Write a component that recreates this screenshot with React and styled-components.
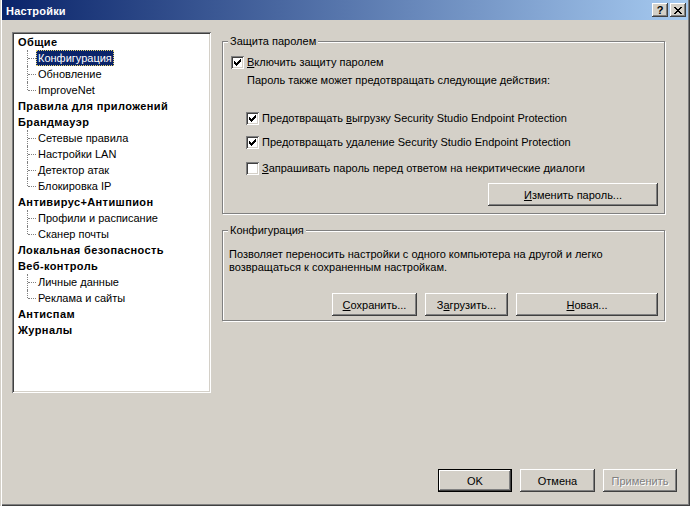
import React from 'react';
import styled, { createGlobalStyle, css } from 'styled-components';

const GlobalStyle = createGlobalStyle`
  html, body {
    margin: 0;
    padding: 0;
    background: #d4d0c8;
  }
  body {
    font-family: "Liberation Sans", Arial, sans-serif;
    font-size: 11px;
    color: #000;
  }
`;

const tree = [
  { label: 'Общие', children: ['Конфигурация', 'Обновление', 'ImproveNet'] },
  { label: 'Правила для приложений' },
  { label: 'Брандмауэр', children: ['Сетевые правила', 'Настройки LAN', 'Детектор атак', 'Блокировка IP'] },
  { label: 'Антивирус+Антишпион', children: ['Профили и расписание', 'Сканер почты'] },
  { label: 'Локальная безопасность' },
  { label: 'Веб-контроль', children: ['Личные данные', 'Реклама и сайты'] },
  { label: 'Антиспам' },
  { label: 'Журналы' },
];

const CHECK = [
  '......#',
  '.....##',
  '#...###',
  '##.###.',
  '#####..',
  '.###...',
  '..#....',
];

const Window = styled.div`
  width: 690px;
  height: 506px;
  box-sizing: border-box;
  padding: 0 2px 2px 2px;
  background: #d4d0c8;
  box-shadow: inset 1px 0 #d4d0c8, inset 2px 0 #fff, inset -1px -1px #404040,
    inset -2px -2px #808080;
  display: flex;
  flex-direction: column;
  overflow: hidden;
`;

const TitleBar = styled.div`
  height: 20px;
  flex: none;
  display: flex;
  align-items: center;
  padding: 0 2px 0 4px;
  background: linear-gradient(to right, #0a246a, #a6caf0);
  color: #fff;
  font-weight: bold;
  font-size: 11px;
`;

const TitleText = styled.div`
  flex: 1;
  line-height: 20px;
  padding-top: 1px;
  letter-spacing: 0.2px;
`;

const TitleButton = styled.div`
  width: 16px;
  height: 14px;
  box-sizing: border-box;
  margin-left: 2px;
  background: #d4d0c8;
  box-shadow: inset -1px -1px #404040, inset 1px 1px #fff, inset -2px -2px #808080;
  color: #000;
  font-size: 11px;
  font-weight: bold;
  line-height: 14px;
  text-align: center;
  display: flex;
  align-items: center;
  justify-content: center;
`;

const Body = styled.div`
  flex: 1;
  display: flex;
  flex-direction: column;
  padding: 12px 10px 0 10px;
`;

const Main = styled.div`
  display: flex;
  gap: 11px;
  height: 361px;
`;

const TreePanel = styled.div`
  width: 199px;
  height: 361px;
  box-sizing: border-box;
  padding: 2px;
  background: #fff;
  box-shadow: inset 1px 1px #808080, inset -1px -1px #fff, inset 2px 2px #404040,
    inset -2px -2px #d4d0c8;
`;

const TreeRow = styled.div`
  position: relative;
  height: 16px;
  display: flex;
  align-items: center;
  padding-left: ${p => (p.$child ? 22 : 2)}px;
  font-weight: ${p => (p.$child ? 'normal' : 'bold')};
  letter-spacing: ${p => (p.$child ? 0 : 0.4)}px;

  ${p =>
    p.$child &&
    css`
      &::before {
        content: '';
        position: absolute;
        left: 13px;
        top: 0;
        height: ${p.$last ? 8 : 16}px;
        border-left: 1px dotted #808080;
      }
      &::after {
        content: '';
        position: absolute;
        left: 14px;
        top: 8px;
        width: 8px;
        border-top: 1px dotted #808080;
      }
    `}
`;

const TreeLabel = styled.span`
  height: 16px;
  line-height: 16px;
  padding: 0 2px;
  white-space: nowrap;
  box-sizing: border-box;
  ${p =>
    p.$selected &&
    css`
      background: #0a246a;
      color: #fff;
      outline: 1px dotted #e8d670;
      outline-offset: -1px;
    `}
`;

const RightColumn = styled.div`
  width: 444px;
  padding-top: 9px;
  display: flex;
  flex-direction: column;
`;

const GroupBox = styled.div`
  position: relative;
  width: 443px;
  height: ${p => p.$h}px;
  box-sizing: border-box;
  margin-top: ${p => p.$mt || 0}px;
  border: 1px solid #808080;
  box-shadow: inset 1px 1px #fff, 1px 1px #fff;
  display: flex;
  flex-direction: column;
`;

const Caption = styled.div`
  position: absolute;
  top: -7px;
  left: 5px;
  padding: 0 2px;
  line-height: 13px;
  background: #d4d0c8;
`;

const CheckRow = styled.div`
  display: flex;
  align-items: center;
  height: 13px;
  margin-top: ${p => p.$mt}px;
  margin-left: ${p => p.$ml}px;
`;

const CheckBox = styled.span`
  width: 13px;
  height: 13px;
  flex: none;
  background: #fff;
  box-shadow: inset 1px 1px #808080, inset -1px -1px #fff, inset 2px 2px #404040,
    inset -2px -2px #d4d0c8;
  display: block;
`;

const CheckText = styled.span`
  margin-left: 3px;
  line-height: 13px;
  white-space: nowrap;
`;

const Text = styled.div`
  line-height: 13px;
  margin-top: ${p => p.$mt}px;
  margin-left: ${p => p.$ml}px;
  white-space: nowrap;
`;

const ButtonRow = styled.div`
  display: flex;
  justify-content: flex-end;
  gap: 8px;
  margin-top: ${p => p.$mt}px;
  padding-right: ${p => p.$pr}px;
`;

const Button = styled.button`
  width: ${p => p.$w}px;
  height: 23px;
  box-sizing: border-box;
  padding: 0;
  margin: 0;
  font-family: "Liberation Sans", Arial, sans-serif;
  font-size: 11px;
  font-weight: normal;
  color: #000;
  background: #d4d0c8;
  border: none;
  box-shadow: inset -1px -1px #404040, inset 1px 1px #fff, inset -2px -2px #808080;
  ${p =>
    p.$default &&
    css`
      box-shadow: inset 0 0 0 1px #000, inset -2px -2px #404040, inset 2px 2px #fff,
        inset -3px -3px #808080;
    `}
  ${p =>
    p.$disabled &&
    css`
      color: #808080;
      text-shadow: 1px 1px #fff;
    `}
`;

const Footer = styled.div`
  margin-top: 76px;
  display: flex;
  justify-content: flex-end;
  gap: 8px;
  padding-right: 1px;
`;

function CheckMark() {
  const px = [];
  CHECK.forEach((row, y) =>
    row.split('').forEach((c, x) => {
      if (c === '#') px.push(<rect key={`${x}-${y}`} x={x + 3} y={y + 3} width="1" height="1" />);
    })
  );
  return (
    <svg width="13" height="13" viewBox="0 0 13 13" shapeRendering="crispEdges" fill="#000">
      {px}
    </svg>
  );
}

function Check({ checked, mt, ml, children }) {
  return (
    <CheckRow $mt={mt} $ml={ml}>
      <CheckBox>{checked && <CheckMark />}</CheckBox>
      <CheckText>{children}</CheckText>
    </CheckRow>
  );
}

function CloseGlyph() {
  return (
    <svg width="8" height="7" viewBox="0 0 8 7" shapeRendering="crispEdges" fill="#000">
      <path d="M0 0h2v1h-2zM6 0h2v1h-2zM1 1h2v1h-2zM5 1h2v1h-2zM2 2h4v1h-4zM3 3h2v1h-2zM2 4h4v1h-4zM1 5h2v1h-2zM5 5h2v1h-2zM0 6h2v1h-2zM6 6h2v1h-2z" />
    </svg>
  );
}

export default function App() {
  return (
    <>
      <GlobalStyle />
      <Window>
        <TitleBar>
          <TitleText>Настройки</TitleText>
          <TitleButton>?</TitleButton>
          <TitleButton>
            <CloseGlyph />
          </TitleButton>
        </TitleBar>
        <Body>
          <Main>
            <TreePanel>
              {tree.map(node => (
                <React.Fragment key={node.label}>
                  <TreeRow>
                    <TreeLabel>{node.label}</TreeLabel>
                  </TreeRow>
                  {(node.children || []).map((child, i, arr) => (
                    <TreeRow key={child} $child $last={i === arr.length - 1}>
                      <TreeLabel $selected={child === 'Конфигурация'}>{child}</TreeLabel>
                    </TreeRow>
                  ))}
                </React.Fragment>
              ))}
            </TreePanel>
            <RightColumn>
              <GroupBox $h={173}>
                <Caption>Защита паролем</Caption>
                <Check checked mt={14} ml={8}>
                  <u>В</u>ключить защиту паролем
                </Check>
                <Text $mt={5} $ml={24}>
                  Пароль также может предотвращать следующие действия:
                </Text>
                <Check checked mt={25} ml={23}>
                  Предотвращать <u>в</u>ыгрузку Security Studio Endpoint Protection
                </Check>
                <Check checked mt={11} ml={23}>
                  Предотвращать <u>у</u>даление Security Studio Endpoint Protection
                </Check>
                <Check mt={13} ml={23}>
                  <u>З</u>апрашивать пароль перед ответом на некритические диалоги
                </Check>
                <ButtonRow $mt={8} $pr={6}>
                  <Button $w={170}>
                    <u>И</u>зменить пароль...
                  </Button>
                </ButtonRow>
              </GroupBox>
              <GroupBox $h={91} $mt={16}>
                <Caption>Конфигурация</Caption>
                <Text $mt={17} $ml={6}>
                  Позволяет переносить настройки с одного компьютера на другой и легко
                </Text>
                <Text $mt={0} $ml={6}>
                  возвращаться к сохраненным настройкам.
                </Text>
                <ButtonRow $mt={19} $pr={6}>
                  <Button $w={85}>
                    <u>С</u>охранить...
                  </Button>
                  <Button $w={83}>
                    З<u>а</u>грузить...
                  </Button>
                  <Button $w={142}>
                    <u>Н</u>овая...
                  </Button>
                </ButtonRow>
              </GroupBox>
            </RightColumn>
          </Main>
          <Footer>
            <Button $w={74} $default>
              OK
            </Button>
            <Button $w={75}>Отмена</Button>
            <Button $w={74} $disabled>
              Применить
            </Button>
          </Footer>
        </Body>
      </Window>
    </>
  );
}
